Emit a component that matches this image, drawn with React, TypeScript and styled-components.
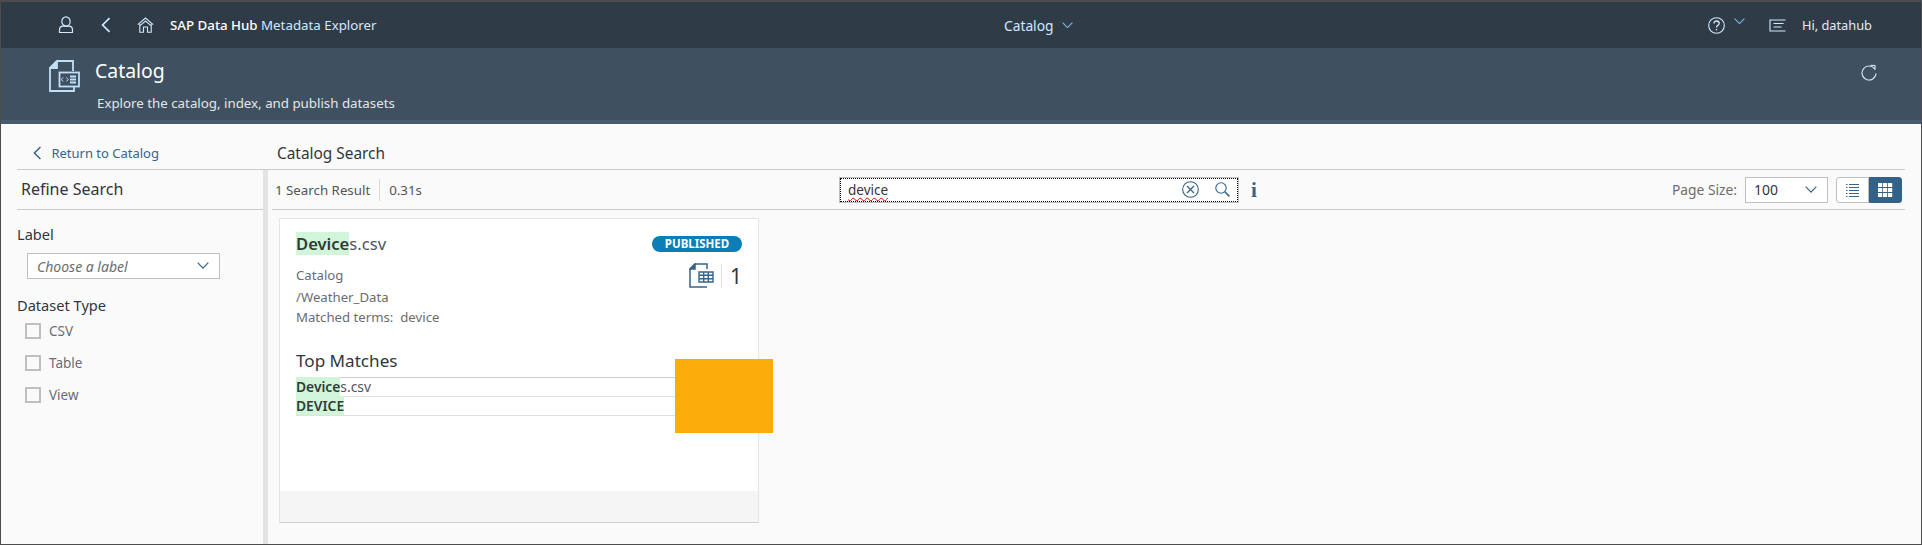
import React from "react";
import styled, { createGlobalStyle } from "styled-components";

const GlobalStyle = createGlobalStyle`
  html, body { margin: 0; padding: 0; background: #fafafa; }
  body { font-family: "Noto Sans", "Open Sans", sans-serif; color: #32363a; }
  * { box-sizing: border-box; }
`;

const Page = styled.div`
  position: relative;
  width: 1922px;
  height: 545px;
  overflow: hidden;
  background: #fafafa;
  border-style: solid;
  border-color: #4d4d4d;
  border-width: 2px 1px 1px 1px;
  display: flex;
  flex-direction: column;
`;

const Shell = styled.header`
  height: 46px;
  flex: none;
  background: #2f3c48;
  display: flex;
  justify-content: space-between;
  align-items: center;
  padding: 0 49px 0 57px;
`;

const ShellLeft = styled.div`
  display: flex;
  align-items: center;
`;

const ShellRight = styled.div`
  display: flex;
  align-items: center;
  justify-content: flex-end;
`;

const IconSlot = styled.span<{ $w: number; $mr?: number; $mt?: number }>`
  display: inline-flex;
  width: ${(p) => p.$w}px;
  margin-right: ${(p) => p.$mr ?? 0}px;
  margin-top: ${(p) => p.$mt ?? 0}px;
  justify-content: center;
  align-items: center;
  flex: none;
`;

const Brand = styled.span`
  font-size: 13.3px;
  color: #fff;
  font-weight: 500;
  white-space: nowrap;
`;

const BrandSub = styled.span`
  color: #d1e8ff;
  font-weight: 400;
`;

const ShellTitle = styled.div`
  display: flex;
  align-items: center;
  gap: 8px;
  padding-right: 8px;
  font-size: 13.8px;
  color: #d1e8ff;
`;

const Greeting = styled.span`
  font-size: 12.8px;
  color: #e4e8ec;
`;

const SubHeader = styled.section`
  height: 76px;
  flex: none;
  background: #3f5161;
  border-bottom: 4px solid;
  border-image: linear-gradient(#557085 0 3px, #475c6e 3px) 4;
  position: relative;
  display: flex;
  padding: 12px 44px 0 48px;
`;

const HeaderText = styled.div`
  margin-left: 15px;
  flex: 1;
`;

const HeaderTitle = styled.div`
  color: #fff;
  font-size: 19.4px;
  line-height: 24px;
  margin-top: -1px;
`;

const HeaderSub = styled.div`
  color: #e5e5e5;
  font-size: 13.3px;
  line-height: 18px;
  margin-top: 11px;
  margin-left: 2px;
`;

const Refresh = styled.div`
  margin: 4px 0 0 0;
`;

const TopRow = styled.div`
  height: 46px;
  flex: none;
  margin: 0 16px;
  display: flex;
  border-bottom: 1px solid #cccccc;
  align-items: center;
  padding-top: 13px;
`;

const BackLink = styled.div`
  width: 260px;
  display: flex;
  align-items: center;
  gap: 10px;
  padding-left: 16px;
  font-size: 13px;
  color: #366589;
`;

const CrumbTitle = styled.div`
  font-size: 15.4px;
  color: #32363a;
`;

const Body = styled.div`
  flex: 1;
  display: flex;
  margin-left: 16px;
  margin-right: 16px;
  min-height: 0;
`;

const Sidebar = styled.aside`
  width: 246px;
  flex: none;
`;

const SideTitle = styled.div`
  height: 40px;
  border-bottom: 1px solid #cccccc;
  font-size: 16px;
  line-height: 39px;
  padding-left: 4px;
  color: #32363a;
`;

const FieldLabel = styled.div<{ $mt: number }>`
  font-size: 14.6px;
  line-height: 20px;
  margin-top: ${(p) => p.$mt}px;
`;

const LabelSelect = styled.div`
  width: 193px;
  height: 26px;
  margin: 9px 0 0 10px;
  border: 1px solid #bfbfbf;
  background: #fff;
  display: flex;
  align-items: center;
  justify-content: space-between;
  padding: 0 10px 0 9px;
  font-size: 14px;
  font-style: italic;
  color: #6a6d70;
`;

const CheckRow = styled.label`
  height: 32px;
  display: flex;
  align-items: center;
  gap: 8px;
  padding-left: 8px;
  font-size: 13.5px;
  color: #6a6d70;
`;

const CheckBox = styled.span`
  width: 16px;
  height: 16px;
  border: 2px solid #bfbfbf;
  background: #fafafa;
`;

const Splitter = styled.div`
  width: 5px;
  flex: none;
  background: #e3e3e3;
`;

const Main = styled.main`
  flex: 1;
  min-width: 0;
  padding-left: 3px;
`;

const Toolbar = styled.div`
  height: 40px;
  border-bottom: 1px solid #cccccc;
  display: grid;
  grid-template-columns: 564px 400px 1fr;
  align-items: center;
  padding-left: 3px;
  margin-left: 1px;
`;

const ResultInfo = styled.div`
  display: flex;
  align-items: center;
  font-size: 13.3px;
  color: #515559;
`;

const ResultDivider = styled.span`
  width: 1px;
  height: 22px;
  background: #d9d9d9;
  margin: 0 9px;
`;

const SearchWrap = styled.div`
  position: relative;
  height: 26px;
  border: 1px solid #bfbfbf;
  background: #fff;
  outline: 1px dotted #000;
  outline-offset: -2px;
  display: flex;
  align-items: center;
  padding: 0 8px;
  font-size: 13.5px;
  color: #32363a;
`;

const SearchTerm = styled.span`
  flex: 1;
`;

const Squiggle = styled.span`
  text-decoration: underline wavy #e00000 1px;
  text-underline-offset: 2px;
`;

const InfoMark = styled.span`
  position: absolute;
  left: 411px;
  top: 0;
  font-family: "Liberation Serif", serif;
  font-weight: 700;
  font-size: 21px;
  line-height: 24px;
  color: #366589;
`;

const ToolbarRight = styled.div`
  display: flex;
  justify-content: flex-end;
  align-items: center;
  padding-right: 3px;
  font-size: 13.8px;
  color: #6a6d70;
`;

const SizeSelect = styled.div`
  width: 83px;
  height: 26px;
  margin-left: 8px;
  border: 1px solid #bfbfbf;
  background: #fff;
  display: flex;
  align-items: center;
  justify-content: space-between;
  padding: 0 10px 0 8px;
  font-size: 14px;
  color: #32363a;
`;

const Segment = styled.div`
  display: flex;
  margin-left: 8px;
`;

const SegButton = styled.div<{ $on?: boolean }>`
  width: 33px;
  height: 26px;
  display: flex;
  align-items: center;
  justify-content: center;
  background: ${(p) => (p.$on ? "#346187" : "#fff")};
  border: 1px solid ${(p) => (p.$on ? "#346187" : "#bfbfbf")};
  border-radius: ${(p) => (p.$on ? "0 3px 3px 0" : "3px 0 0 3px")};
`;

const Card = styled.article`
  width: 480px;
  height: 305px;
  margin: 8px 0 0 8px;
  background: #fff;
  border: 1px solid #e5e5e5;
  border-bottom: 1px solid #d0d0d0;
  display: flex;
  flex-direction: column;
`;

const CardBody = styled.div`
  flex: 1;
  padding: 15px 16px 0 16px;
`;

const CardTop = styled.div`
  display: flex;
  justify-content: space-between;
`;

const CardFooter = styled.div`
  height: 31px;
  background: #f5f5f5;
`;

const CardName = styled.div`
  font-size: 16.6px;
  line-height: 19px;
  color: #515559;
`;

const Hit = styled.span`
  background: #d1f5d9;
  color: #2f3c36;
  font-weight: 600;
`;

const Meta = styled.div<{ $mt: number }>`
  font-size: 13.2px;
  line-height: 18px;
  color: #6a6d70;
  margin-top: ${(p) => p.$mt}px;
  white-space: pre;
`;

const CardSide = styled.div`
  display: flex;
  flex-direction: column;
  align-items: flex-end;
`;

const Badge = styled.span`
  width: 90px;
  height: 16px;
  margin-top: 2px;
  border-radius: 8px;
  background: #0a7fb5;
  color: #fff;
  font-size: 11.5px;
  font-weight: 700;
  line-height: 16px;
  text-align: center;
`;

const CountRow = styled.div`
  display: flex;
  align-items: center;
  margin-top: 11px;
`;

const CountDivider = styled.span`
  width: 1px;
  height: 24px;
  background: #e0e0e0;
  margin: 0 8px 0 7px;
`;

const CountValue = styled.span`
  font-size: 21px;
  line-height: 24px;
  color: #32363a;
`;

const MatchTitle = styled.div`
  font-size: 17.1px;
  line-height: 24px;
  margin-top: 23px;
  padding-bottom: 4px;
  border-bottom: 1px solid #cccccc;
  color: #32363a;
`;

const MatchRow = styled.div`
  height: 19px;
  font-size: 13.8px;
  line-height: 18px;
  border-bottom: 1px solid #e0e0e0;
  color: #515559;
`;

const Redaction = styled.div`
  position: absolute;
  left: 674px;
  top: 357px;
  width: 98px;
  height: 74px;
  background: #f9ac0a;
`;

const UserIcon = () => (
  <svg width="16" height="18" viewBox="0 0 16 18" fill="none" stroke="#d1e8ff" strokeWidth="1.2">
    <ellipse cx="8" cy="5.5" rx="4.2" ry="4.6" />
    <path d="M1.5 16.5v-2.5c0-2.2 1.6-3.8 3.8-3.8h5.4c2.2 0 3.8 1.6 3.8 3.8v2.5z" />
  </svg>
);

const BackIcon = ({ color = "#d1e8ff", h = 16 }: { color?: string; h?: number }) => (
  <svg width={h * 0.6} height={h} viewBox="0 0 9 15" fill="none" stroke={color} strokeWidth="1.6">
    <path d="M8 1 1.5 7.5 8 14" />
  </svg>
);

const HomeIcon = () => (
  <svg width="17" height="16" viewBox="0 0 17 16" fill="none" stroke="#d1e8ff" strokeWidth="1.1">
    <path d="M.8 7.6 8.5 1l7.7 6.6" />
    <path d="M2.8 6.8v8.4h3.7V10h4v5.2h3.7V6.8" />
    <path d="M3 8.6 8.5 4 14 8.6" />
  </svg>
);

const Chevron = ({ color = "#7fb5de", w = 11 }: { color?: string; w?: number }) => (
  <svg width={w} height={w * 0.6} viewBox="0 0 11 6.6" fill="none" stroke={color} strokeWidth="1.1">
    <path d="M.6.6 5.5 5.6 10.4.6" />
  </svg>
);

const HelpIcon = () => (
  <svg width="17" height="17" viewBox="0 0 17 17" fill="none" stroke="#d1e8ff" strokeWidth="1.1">
    <circle cx="8.5" cy="8.5" r="7.8" />
    <path d="M5.9 6.6c0-1.6 1.2-2.6 2.7-2.6s2.6 1 2.6 2.3c0 1.2-.8 1.7-1.6 2.3-.7.5-1.1 1-1.1 2" strokeWidth="1.3" />
    <path d="M8.5 12v1.3" strokeWidth="1.4" />
  </svg>
);

const NotesIcon = () => (
  <svg width="17" height="13" viewBox="0 0 17 13" fill="none" stroke="#d1e8ff" strokeWidth="1.1">
    <path d="M16.5 1H1v11h15.5" />
    <path d="M4.5 4.5h10M4.5 8h8" />
  </svg>
);

const CatalogIcon = () => (
  <svg width="31" height="32" viewBox="0 0 31 32" fill="none" stroke="#c3def5" strokeWidth="1.8">
    <path d="M8 1 1 8v23h24v-4" />
    <path d="M8 1h16v10" />
    <path d="M8 1v7H1z" fill="#c3def5" />
    <rect x="10.5" y="12.5" width="19.5" height="14" />
    <path d="M21 16.5h6M21 19.5h6M21 22.5h6" />
    <path d="M14 17.5l-1.6 2 1.6 2M17.5 17.5l1.6 2-1.6 2" strokeWidth="1" />
  </svg>
);

const RefreshIcon = () => (
  <svg width="16" height="17" viewBox="0 0 16 17" fill="none" stroke="#d1e8ff" strokeWidth="1.1">
    <path d="M13.9 5.2A7 7 0 1 0 15 9.5" />
    <path d="M9.8 1.2 14 1.4v4.4" />
  </svg>
);

const ClearIcon = () => (
  <svg width="17" height="17" viewBox="0 0 17 17" fill="none" stroke="#366589" strokeWidth="1.1">
    <circle cx="8.5" cy="8.5" r="7.8" />
    <path d="M5 5l7 7M12 5l-7 7" strokeWidth="1.3" />
  </svg>
);

const SearchIcon = () => (
  <svg width="15" height="15" viewBox="0 0 15 15" fill="none" stroke="#366589" strokeWidth="1.1">
    <circle cx="6" cy="6" r="5.2" />
    <path d="M9.8 9.8l4.6 4.6" strokeWidth="1.6" />
  </svg>
);

const ListIcon = () => (
  <svg width="13" height="14" viewBox="0 0 13 14" fill="none" stroke="#366589" strokeWidth="1">
    <path d="M0 1.5h1.5M3 1.5h10M0 4.5h1.5M3 4.5h10M0 7.5h1.5M3 7.5h10M0 10.5h1.5M3 10.5h10M0 13.5h1.5M3 13.5h10" />
  </svg>
);

const GridIcon = () => (
  <svg width="15" height="14" viewBox="0 0 15 14" fill="#fff">
    {[0, 5, 10].flatMap((y) =>
      [0, 5, 10].map((x) => <rect key={`${x}-${y}`} x={x} y={y} width="4.2" height="4" />)
    )}
  </svg>
);

const TableFileIcon = () => (
  <svg width="25" height="25" viewBox="0 0 25 25" fill="none" stroke="#366589" strokeWidth="1.5">
    <path d="M6 1 1 6v18h17" />
    <path d="M6 1h12v5" />
    <path d="M6 1v5H1z" fill="#366589" />
    <rect x="10" y="9" width="14" height="10" fill="#fff" strokeWidth="0" />
    <path d="M10 9h14v10H10zM10 12.3h14M10 15.7h14M14.7 9v10M19.3 9v10" strokeWidth="1.4" />
  </svg>
);

const filters = ["CSV", "Table", "View"];

const App: React.FC = () => {
  return (
    <Page>
      <GlobalStyle />
      <Shell>
        <ShellLeft>
          <IconSlot $w={16} $mr={27}><UserIcon /></IconSlot>
          <IconSlot $w={10} $mr={26}><BackIcon /></IconSlot>
          <IconSlot $w={17} $mr={16}><HomeIcon /></IconSlot>
          <Brand>SAP Data Hub <BrandSub>Metadata Explorer</BrandSub></Brand>
        </ShellLeft>
        <ShellTitle>
          Catalog
          <Chevron />
        </ShellTitle>
        <ShellRight>
          <IconSlot $w={17} $mr={9}><HelpIcon /></IconSlot>
          <IconSlot $w={11} $mr={24} $mt={-8}><Chevron /></IconSlot>
          <IconSlot $w={17} $mr={16}><NotesIcon /></IconSlot>
          <Greeting>Hi, datahub</Greeting>
        </ShellRight>
      </Shell>
      <SubHeader>
        <CatalogIcon />
        <HeaderText>
          <HeaderTitle>Catalog</HeaderTitle>
          <HeaderSub>Explore the catalog, index, and publish datasets</HeaderSub>
        </HeaderText>
        <Refresh><RefreshIcon /></Refresh>
      </SubHeader>
      <TopRow>
        <BackLink>
          <BackIcon color="#366589" h={14} />
          Return to Catalog
        </BackLink>
        <CrumbTitle>Catalog Search</CrumbTitle>
      </TopRow>
      <Body>
        <Sidebar>
          <SideTitle>Refine Search</SideTitle>
          <FieldLabel $mt={14}>Label</FieldLabel>
          <LabelSelect>
            Choose a label
            <Chevron color="#366589" w={12} />
          </LabelSelect>
          <FieldLabel $mt={16}>Dataset Type</FieldLabel>
          {filters.map((f) => (
            <CheckRow key={f}>
              <CheckBox />
              {f}
            </CheckRow>
          ))}
        </Sidebar>
        <Splitter />
        <Main>
          <Toolbar>
            <ResultInfo>
              1 Search Result
              <ResultDivider />
              0.31s
            </ResultInfo>
            <SearchWrap>
              <SearchTerm><Squiggle>device</Squiggle></SearchTerm>
              <IconSlot $w={17} $mr={16}><ClearIcon /></IconSlot>
              <IconSlot $w={15}><SearchIcon /></IconSlot>
              <InfoMark>i</InfoMark>
            </SearchWrap>
            <ToolbarRight>
              Page Size:
              <SizeSelect>
                100
                <Chevron color="#366589" w={12} />
              </SizeSelect>
              <Segment>
                <SegButton><ListIcon /></SegButton>
                <SegButton $on><GridIcon /></SegButton>
              </Segment>
            </ToolbarRight>
          </Toolbar>
          <Card>
            <CardBody>
              <CardTop>
                <div>
                  <CardName><Hit>Device</Hit>s.csv</CardName>
                  <Meta $mt={13}>Catalog</Meta>
                  <Meta $mt={4}>/Weather_Data</Meta>
                  <Meta $mt={2}>Matched terms:  device</Meta>
                </div>
                <CardSide>
                  <Badge>PUBLISHED</Badge>
                  <CountRow>
                    <TableFileIcon />
                    <CountDivider />
                    <CountValue>1</CountValue>
                  </CountRow>
                </CardSide>
              </CardTop>
              <MatchTitle>Top Matches</MatchTitle>
              <MatchRow><Hit>Device</Hit>s.csv</MatchRow>
              <MatchRow><Hit>DEVICE</Hit></MatchRow>
            </CardBody>
            <CardFooter />
          </Card>
        </Main>
      </Body>
      <Redaction />
    </Page>
  );
};

export default App;
